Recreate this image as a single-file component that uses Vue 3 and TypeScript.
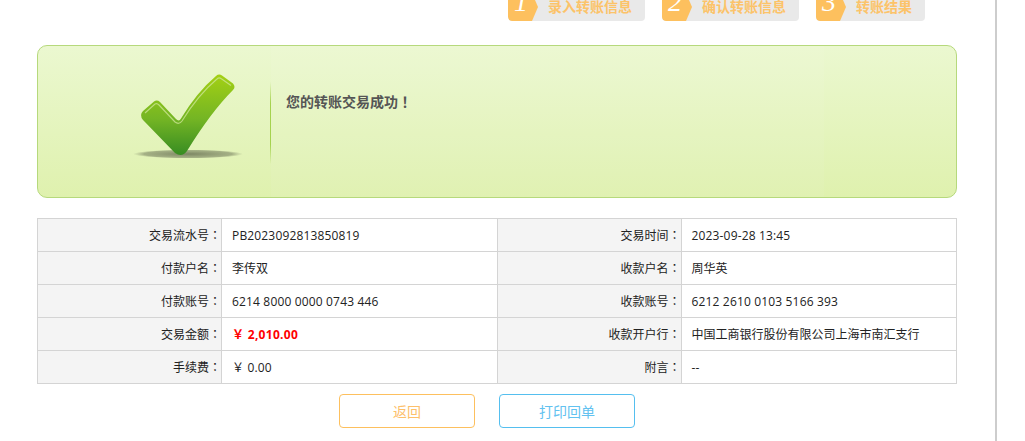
<script setup lang="ts">
const steps = [
  { num: "1", label: "录入转账信息", wide: true },
  { num: "2", label: "确认转账信息", wide: true },
  { num: "3", label: "转账结果", wide: false },
];

const rows = [
  ["交易流水号", "PB2023092813850819", "交易时间", "2023-09-28 13:45"],
  ["付款户名", "李传双", "收款户名", "周华英"],
  ["付款账号", "6214 8000 0000 0743 446", "收款账号", "6212 2610 0103 5166 393"],
  ["交易金额", "￥ 2,010.00", "收款开户行", "中国工商银行股份有限公司上海市南汇支行"],
  ["手续费", "￥ 0.00", "附言", "--"],
];

// latin and digit values run a little wider than the cjk ones
const isLatin = (text: string) => !/[\u4e00-\u9fff]/.test(text);
</script>

<template>
  <div class="page">
    <div class="steps">
      <div v-for="s in steps" :key="s.num" class="step" :class="{ short: !s.wide }">
        <span class="badge">{{ s.num }}</span>
        <span class="step-label">{{ s.label }}</span>
      </div>
    </div>

    <div class="result">
      <div class="check-area">
        <svg class="check" viewBox="130 70 120 95" width="120" height="95">
          <defs>
            <linearGradient id="checkFill" x1="0" y1="0" x2="0" y2="1">
              <stop offset="0" stop-color="#a3d014" />
              <stop offset="0.55" stop-color="#74b524" />
              <stop offset="1" stop-color="#378c22" />
            </linearGradient>
            <radialGradient id="shadowFill">
              <stop offset="0" stop-color="#6b7355" stop-opacity="0.85" />
              <stop offset="0.8" stop-color="#7b8463" stop-opacity="0.6" />
              <stop offset="1" stop-color="#8b9470" stop-opacity="0" />
            </radialGradient>
          </defs>
          <ellipse cx="188" cy="154" rx="55" ry="4.5" fill="url(#shadowFill)" />
          <path
            d="M143 111 L154 101.500 Q157 99.500 160 102 L176 119 Q179 122 181 118.500 Q197 92 216 76 Q219 73.500 222 75.500 L233 83.500 Q236 87 233 90 Q211 112 187 151 Q182 158 175 153 L143 120 Q139 115 143 111 Z"
            fill="url(#checkFill)"
          />
          <path
            d="M145 113 L155 104 Q157 103 159 105 L175 122 Q179 125 182 121 Q198 95 217 79 Q219 77 221 78.500 L231 85.500"
            fill="none"
            stroke="#cfe79a"
            stroke-opacity="0.75"
            stroke-width="1.200"
          />
        </svg>
      </div>
      <div class="message">您的转账交易成功<span class="punct">！</span></div>
    </div>

    <table class="details">
      <tbody>
        <tr v-for="(r, i) in rows" :key="i">
          <td class="label">{{ r[0] }}<span class="punct">：</span></td>
          <td class="value" :class="{ amount: i === 3, latin: isLatin(r[1]) }">{{ r[1] }}</td>
          <td class="label">{{ r[2] }}<span class="punct">：</span></td>
          <td class="value" :class="{ latin: isLatin(r[3]) }">{{ r[3] }}</td>
        </tr>
      </tbody>
    </table>

    <div class="actions">
      <button class="btn back">返回</button>
      <button class="btn print">打印回单</button>
    </div>
  </div>
</template>

<style>
html,
body {
  margin: 0;
  background: #fff;
  overflow: hidden;
}
</style>

<style scoped>
.page {
  box-sizing: border-box;
  width: 997px;
  height: 441px;
  padding: 0 38px 0 37px;
  border-right: 2px solid #cdcdcd;
  font-family: "Open Sans", "Noto Sans CJK SC", sans-serif;
  font-size: 12px;
  color: #222;
  overflow: hidden;
}

.punct {
  font-family: "Noto Sans CJK TC", sans-serif;
}

.steps {
  display: flex;
  justify-content: flex-end;
  gap: 17px;
  height: 28px;
  margin-top: -7px;
  padding-right: 32px;
}

.step {
  display: flex;
  width: 137px;
  height: 28px;
  background: #e9e9e9;
  border-radius: 0 0 4px 4px;
  overflow: hidden;
}

.step.short {
  width: 109px;
}

.badge {
  flex: none;
  width: 30px;
  height: 28px;
  padding-left: 6px;
  box-sizing: border-box;
  background: #fdc05e;
  border-bottom-left-radius: 4px;
  clip-path: polygon(0 0, 24px 0, 30px 14px, 24px 28px, 0 28px);
  font-family: "Liberation Serif", serif;
  font-style: italic;
  font-size: 28px;
  line-height: 18px;
  color: #fff;
}

.step-label {
  margin-left: 10px;
  font-family: "Noto Sans CJK SC", sans-serif;
  font-size: 14px;
  font-weight: bold;
  line-height: 26px;
  color: #fcc369;
  white-space: nowrap;
}

.result {
  display: flex;
  box-sizing: border-box;
  height: 153px;
  margin-top: 24px;
  border: 1px solid #b6d97c;
  border-radius: 10px;
  background: linear-gradient(#ebf8d0, #dff1ae);
  overflow: hidden;
}

.check-area {
  flex: none;
  box-sizing: border-box;
  width: 233px;
  padding: 24px 0 0 92px;
  border-right: 1px solid;
  border-image: linear-gradient(
      transparent 24%,
      #a5d24e 38%,
      #a5d24e 65%,
      transparent 78%
    )
    1;
}

.check {
  display: block;
}

.message {
  width: 553px;
  box-sizing: border-box;
  padding: 45px 0 0 15px;
  background: rgba(255, 255, 255, 0.06);
  font-family: "Noto Sans CJK SC", sans-serif;
  font-size: 14px;
  font-weight: bold;
  line-height: 20px;
  color: #555;
}

.details {
  width: 920px;
  margin-top: 20px;
  border-collapse: collapse;
  table-layout: fixed;
}

.details td {
  height: 33px;
  padding: 0;
  box-sizing: border-box;
  border: 1px solid #d4d4d4;
  white-space: nowrap;
}

.details td:nth-child(odd) {
  width: 184px;
}

.label {
  background: #f4f4f4;
  text-align: right;
}

.value {
  padding-left: 10px !important;
}

.latin {
  letter-spacing: 0.16px;
}

.amount {
  color: #f00;
  font-weight: bold;
  letter-spacing: 0.3px;
}

.actions {
  display: flex;
  gap: 24px;
  margin-top: 10px;
  padding-left: 302px;
}

.btn {
  width: 136px;
  height: 34px;
  padding: 0;
  background: #fff;
  border: 1px solid;
  border-radius: 4px;
  font-family: "Noto Sans CJK SC", sans-serif;
  font-size: 14px;
}

.back {
  border-color: #fdc05e;
  color: #fdc06a;
}

.print {
  border-color: #55bfef;
  color: #62c2f0;
}
</style>
